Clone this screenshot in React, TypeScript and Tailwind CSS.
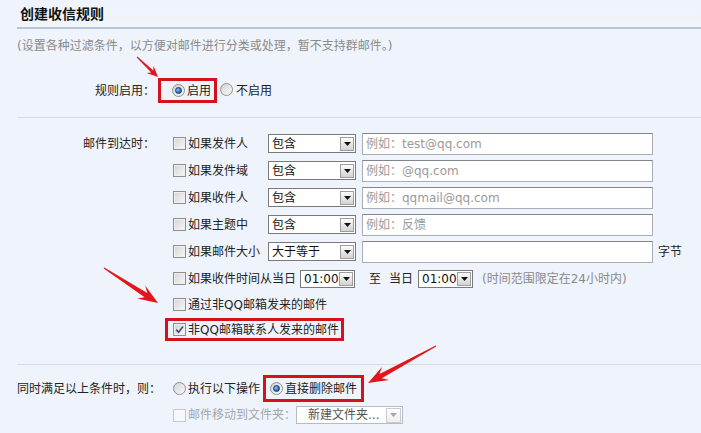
import React from "react";

function Checkbox({ checked = false, disabled = false }: { checked?: boolean; disabled?: boolean }) {
  return (
    <span
      className={
        disabled
          ? "inline-flex h-[13px] w-[13px] shrink-0 items-center justify-center border border-[#c5c9cf] bg-[#f6f8fb]"
          : "inline-flex h-[13px] w-[13px] shrink-0 items-center justify-center border border-[#8e8f8f] bg-gradient-to-br from-[#d4d4d4] to-[#f8f8f8] shadow-[inset_0_0_0_1px_#efefef]"
      }
    >
      {checked && (
        <svg width="9" height="9" viewBox="0 0 9 9">
          <path d="M1.2 4.6 L3.6 7.2 L8 1.4" stroke="#3b4f72" strokeWidth="1.6" fill="none" />
        </svg>
      )}
    </span>
  );
}

function Radio({ checked = false }: { checked?: boolean }) {
  return (
    <span className="inline-flex h-[13px] w-[13px] shrink-0 items-center justify-center rounded-full border border-[#8e8f8f] bg-gradient-to-br from-[#d2d2d2] to-[#fbfbfb]">
      {checked && (
        <span className="h-[7px] w-[7px] rounded-full border border-[#173a6e] bg-[radial-gradient(circle_at_35%_35%,#8cc0f5,#1f5cb0_75%)]" />
      )}
    </span>
  );
}

function DropArrow({ disabled = false }: { disabled?: boolean }) {
  return (
    <span
      className={
        disabled
          ? "mr-[1px] inline-flex h-[15px] w-[15px] shrink-0 items-center justify-center border border-[#c9cbce] bg-gradient-to-b from-[#ffffff] to-[#eeeeee]"
          : "mr-[1px] inline-flex h-[14px] w-[14px] shrink-0 items-center justify-center border border-[#9d9d9d] bg-gradient-to-b from-[#fdfdfd] to-[#d2d2d2]"
      }
    >
      <svg width="7" height="4" viewBox="0 0 7 4">
        <path d="M0 0 L7 0 L3.5 4 Z" fill={disabled ? "#a8a8a8" : "#111"} />
      </svg>
    </span>
  );
}

function Select({ value, className }: { value: string; className: string }) {
  return (
    <span className={"inline-flex shrink-0 items-center justify-between border border-[#7a7a7a] bg-white " + className}>
      <span className="pl-[3px] leading-[14px] text-[#111]">{value}</span>
      <DropArrow />
    </span>
  );
}

function TextInput({ placeholder }: { placeholder?: string }) {
  return (
    <span className="ml-[6px] inline-flex h-[22px] w-[291px] shrink-0 items-center border border-[#a9aeb4] border-t-[#80868d] bg-white pl-[3px] text-[#9a9a9a]">
      {placeholder}
    </span>
  );
}

function arrowPoints(x1: number, y1: number, x2: number, y2: number, headLen: number, headW: number, shaftW: number) {
  const dx = x2 - x1;
  const dy = y2 - y1;
  const L = Math.hypot(dx, dy);
  const ux = dx / L;
  const uy = dy / L;
  const nx = -uy;
  const ny = ux;
  const bx = x2 - ux * headLen;
  const by = y2 - uy * headLen;
  const jx = x2 - ux * headLen * 0.72;
  const jy = y2 - uy * headLen * 0.72;
  const pts = [
    [x1 + nx * 0.5, y1 + ny * 0.5],
    [jx + (nx * shaftW) / 2, jy + (ny * shaftW) / 2],
    [bx + (nx * headW) / 2, by + (ny * headW) / 2],
    [x2, y2],
    [bx - (nx * headW) / 2, by - (ny * headW) / 2],
    [jx - (nx * shaftW) / 2, jy - (ny * shaftW) / 2],
    [x1 - nx * 0.5, y1 - ny * 0.5],
  ];
  return pts.map((p) => p[0].toFixed(1) + "," + p[1].toFixed(1)).join(" ");
}

export default function App() {
  return (
    <div className="relative h-[433px] w-[701px] overflow-hidden bg-[#eff4fc] font-['DejaVu_Sans','Noto_Sans_CJK_SC',sans-serif] text-[12px] leading-[14px] text-[#222]">
      {/* Header */}
      <div className="ml-[17px] h-[29px] border-b-2 border-[#b3c8dc] bg-gradient-to-b from-[#eff4fc] via-[#eff4fc] to-[#f3f4f6] pl-[3px] pt-[5px] text-[14px] font-bold leading-[18px] text-[#111]">
        创建收信规则
      </div>
      <div className="ml-[17px] mt-[9px] leading-[16px] text-[#8a8a8a]">
        (设置各种过滤条件，以方便对邮件进行分类或处理，暂不支持群邮件。)
      </div>

      {/* Rule enable */}
      <div className="mt-[24px] flex h-[25px] items-center">
        <div className="w-[158px] pr-[3px] text-right">规则启用：</div>
        <div className="flex h-[25px] items-center border-[3px] border-[#d5121c] pl-[11px] pr-[3px]">
          <Radio checked />
          <span className="ml-[2px]">启用</span>
        </div>
        <span className="ml-[3px]">
          <Radio />
        </span>
        <span className="ml-[3px]">不启用</span>
      </div>

      <div className="ml-[17px] mt-[14px] border-t border-[#d7dce3]" />

      {/* Conditions */}
      <div className="mt-[12px] flex">
        <div className="flex h-[27px] w-[157px] items-center justify-end pr-[2px]">邮件到达时：</div>
        <div className="flex flex-col pl-[16px]">
          <div className="flex h-[27px] items-center">
            <Checkbox />
            <span className="ml-[2px] w-[80px]">如果发件人</span>
            <Select value="包含" className="h-[19px] w-[88px]" />
            <TextInput placeholder="例如：test@qq.com" />
          </div>
          <div className="flex h-[27px] items-center">
            <Checkbox />
            <span className="ml-[2px] w-[80px]">如果发件域</span>
            <Select value="包含" className="h-[19px] w-[88px]" />
            <TextInput placeholder="例如：@qq.com" />
          </div>
          <div className="flex h-[27px] items-center">
            <Checkbox />
            <span className="ml-[2px] w-[80px]">如果收件人</span>
            <Select value="包含" className="h-[19px] w-[88px]" />
            <TextInput placeholder="例如：qqmail@qq.com" />
          </div>
          <div className="flex h-[27px] items-center">
            <Checkbox />
            <span className="ml-[2px] w-[80px]">如果主题中</span>
            <Select value="包含" className="h-[19px] w-[88px]" />
            <TextInput placeholder="例如：反馈" />
          </div>
          <div className="flex h-[27px] items-center">
            <Checkbox />
            <span className="ml-[2px] w-[80px]">如果邮件大小</span>
            <Select value="大于等于" className="h-[19px] w-[88px]" />
            <TextInput />
            <span className="ml-[5px]">字节</span>
          </div>
          <div className="flex h-[27px] items-center">
            <Checkbox />
            <span className="ml-[2px]">如果收件时间从当日</span>
            <span className="ml-[4px]">
              <Select value="01:00" className="h-[18px] w-[55px]" />
            </span>
            <span className="ml-[14px]">至</span>
            <span className="ml-[8px]">当日</span>
            <span className="ml-[5px]">
              <Select value="01:00" className="h-[18px] w-[55px]" />
            </span>
            <span className="ml-[9px] text-[#8a8a8a]">(时间范围限定在24小时内)</span>
          </div>
          <div className="flex h-[25px] items-center">
            <Checkbox />
            <span className="ml-[2px]">通过非QQ邮箱发来的邮件</span>
          </div>
          <div className="-ml-[8px] mt-[1px] flex h-[23px] w-[179px] items-center border-[3px] border-[#d5121c] pl-[5px]">
            <Checkbox checked />
            <span className="ml-[2px]">非QQ邮箱联系人发来的邮件</span>
          </div>
        </div>
      </div>

      <div className="ml-[17px] mt-[23px] border-t border-[#d7dce3]" />

      {/* Action */}
      <div className="mt-[10px] flex h-[27px] items-center">
        <div className="ml-[17px] w-[156px]">同时满足以上条件时，则：</div>
        <Radio />
        <span className="ml-[2px]">执行以下操作</span>
        <div className="ml-[3px] flex h-[27px] items-center border-[3px] border-[#d5121c] pl-[4px] pr-[4px]">
          <Radio checked />
          <span className="ml-[2px]">直接删除邮件</span>
        </div>
      </div>
      <div className="flex h-[26px] items-center pl-[173px]">
        <Checkbox disabled />
        <span className="ml-[2px] text-[#a3a8ae]">邮件移动到文件夹：</span>
        <span className="inline-flex h-[18px] w-[107px] shrink-0 items-center justify-between border border-[#b8bcc2] bg-white">
          <span className="pl-[11px] leading-[14px] text-[#555]">新建文件夹...</span>
          <DropArrow disabled />
        </span>
      </div>

      {/* Red arrows overlay */}
      <svg className="pointer-events-none absolute left-0 top-0" width="701" height="433">
        <polygon points={arrowPoints(137, 57, 158, 77, 11, 10, 3)} fill="#e3141c" />
        <polygon points={arrowPoints(104, 268, 158, 303, 20, 15, 5)} fill="#e3141c" />
        <polygon points={arrowPoints(436, 346, 368, 383, 20, 15, 5)} fill="#e3141c" />
      </svg>
    </div>
  );
}
